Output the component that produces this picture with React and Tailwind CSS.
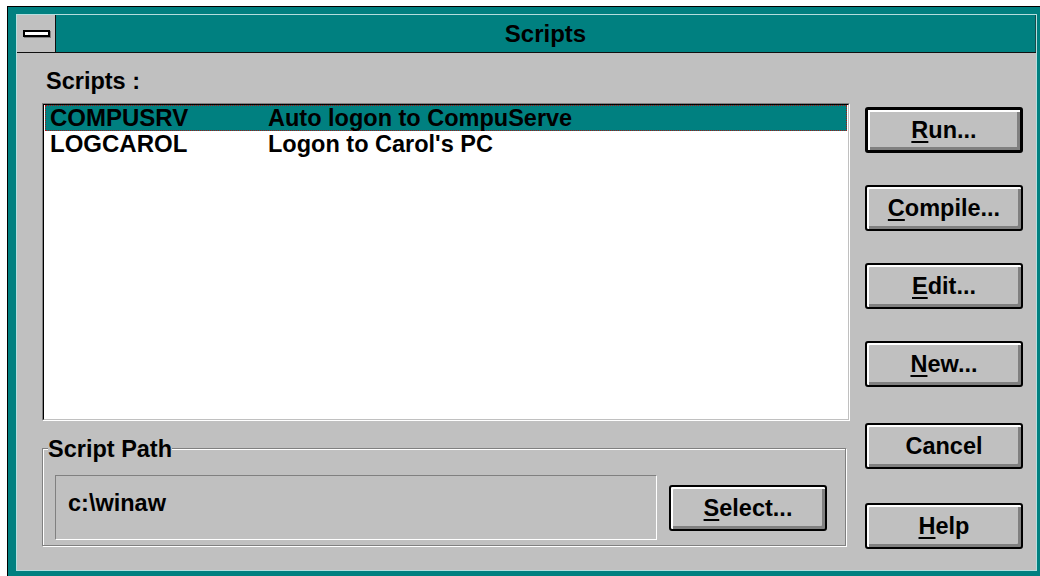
import clsx from "clsx";

const scripts = [
  { name: "COMPUSRV", desc: "Auto logon to CompuServe", selected: true },
  { name: "LOGCAROL", desc: "Logon to Carol's PC" },
];

const actions = [
  { hot: "R", rest: "un...", isDefault: true },
  { hot: "C", rest: "ompile...", gap: "mt-[32px]" },
  { hot: "E", rest: "dit...", gap: "mt-[32px]" },
  { hot: "N", rest: "ew...", gap: "mt-[32px]" },
  { hot: "", rest: "Cancel", gap: "mt-[36px]" },
  { hot: "H", rest: "elp", gap: "mt-[34px]" },
];

function PushButton({ hot, rest, isDefault, className }) {
  return (
    <button
      type="button"
      className={clsx(
        "h-[46px] rounded-[3px] border-black bg-[#c0c0c0] text-black leading-[26px] flex items-center justify-center",
        "shadow-[inset_2px_2px_0_#fff,inset_-2px_-2px_0_#808080,inset_-3px_-3px_0_#808080]",
        isDefault ? "border-[3px]" : "border-2",
        className
      )}
    >
      <span>
        {hot && <span className="underline decoration-2 underline-offset-[3px]">{hot}</span>}
        {rest}
      </span>
    </button>
  );
}

export default function App() {
  return (
    <div className="w-[1040px] h-[576px] bg-white overflow-hidden pt-[6px] pl-[7px] font-['Liberation_Sans',Arial,sans-serif] font-bold text-[23.5px]">
      {/* window frame */}
      <div className="w-[1033px] h-[570px] border-t border-l border-black bg-[#008080] pt-[7px] pl-[8px] pr-[3px] pb-[5px]">
        <div className="h-full border border-[#b4dede] flex flex-col">
          {/* caption */}
          <div className="h-[38px] flex border-b border-[#101010] shrink-0">
            <div className="w-[39px] bg-[#c0c0c0] border-r border-[#101010] flex items-center justify-center">
              <div className="w-[27px] h-[7px] border-2 border-black bg-white shadow-[1px_1px_0_#808080]" />
            </div>
            <div className="flex-1 flex items-center justify-center text-[24px] text-black border-r border-[#1a4a4a]">
              Scripts
            </div>
          </div>

          {/* client area */}
          <div className="flex-1 bg-[#c0c0c0] flex pl-[25px] pt-[15px]">
            <div className="w-[808px] flex flex-col">
              <div className="leading-[26px] pl-[4px]">Scripts :</div>

              <div className="mt-[9px] h-[318px] border border-t-[#808080] border-l-[#808080] border-r-white border-b-white">
                <div className="h-full border border-t-black border-l-black border-r-[#c0c0c0] border-b-[#c0c0c0] bg-white">
                  {scripts.map((s) => (
                    <div
                      key={s.name}
                      className={clsx(
                        "mx-[1px] h-[26px] leading-[26px] flex pl-[4px] border border-dotted",
                        s.selected ? "bg-[#008080] border-[#a01818]" : "border-transparent"
                      )}
                    >
                      <span className="w-[218px] shrink-0 -mt-px text-[24px]">{s.name}</span>
                      <span className="-mt-px">{s.desc}</span>
                    </div>
                  ))}
                </div>
              </div>

              {/* script path group */}
              <div className="relative mt-[27px] w-[804px] border border-[#808080] shadow-[inset_1px_1px_0_#fff,1px_1px_0_#fff] pl-[12px] pt-[26px] pb-[5px] flex items-start">
                <span className="absolute top-[-11px] left-[5px] bg-[#c0c0c0] leading-[23px]">
                  Script Path
                </span>
                <div className="w-[602px] h-[65px] border border-t-[#808080] border-l-[#808080] border-r-white border-b-white pl-[12px] pt-[14px] leading-[26px]">
                  c:\winaw
                </div>
                <PushButton hot="S" rest="elect..." className="ml-[12px] mt-[10px] w-[158px]" />
              </div>
            </div>

            <div className="ml-[15px] mt-[39px] w-[158px] flex flex-col">
              {actions.map((a) => (
                <PushButton
                  key={a.rest}
                  hot={a.hot}
                  rest={a.rest}
                  isDefault={a.isDefault}
                  className={a.gap}
                />
              ))}
            </div>
          </div>
        </div>
      </div>
    </div>
  );
}
